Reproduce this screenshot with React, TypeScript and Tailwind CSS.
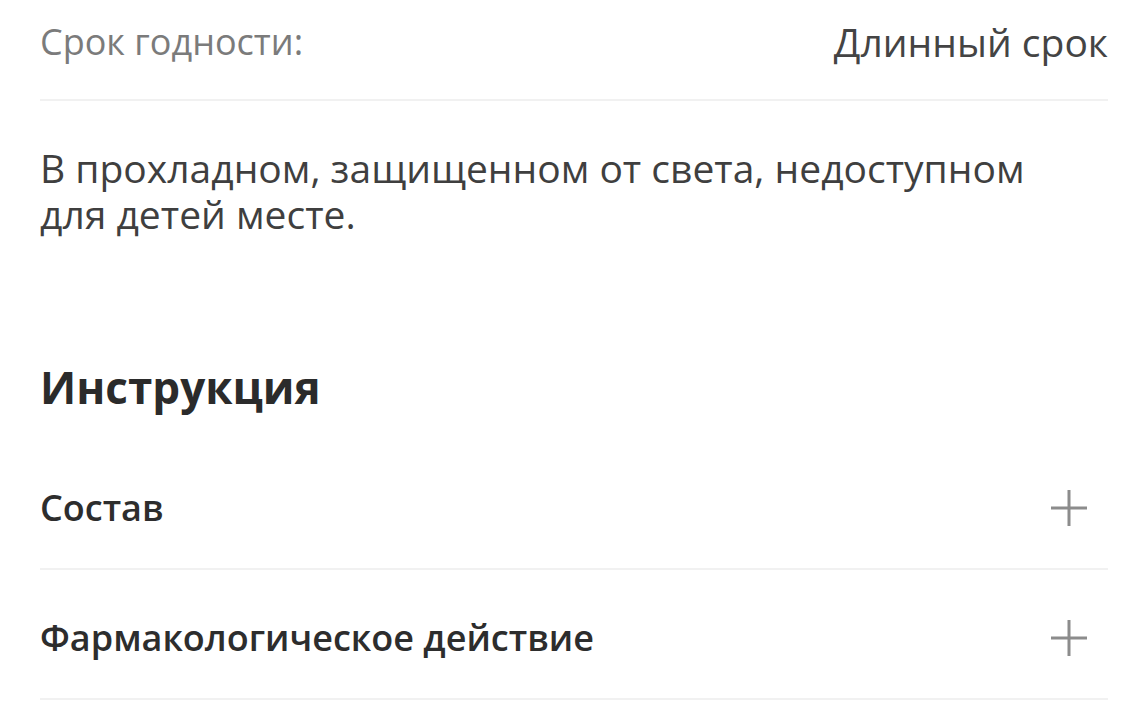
import React from 'react';

const Divider = () => <div className="h-[2px] bg-[#f1f1f1]" />;

const PlusIcon = () => (
  <svg width="38" height="38" viewBox="0 0 38 38" className="text-[#8c8c8c]">
    <path d="M19 1v36M1 19h36" stroke="currentColor" strokeWidth="3" />
  </svg>
);

const AccordionRow = ({ title }: { title: string }) => (
  <div>
    <div className="flex items-center justify-between pt-[48px] pb-[40px]">
      <span className="text-[36px] leading-[40px] font-semibold text-[#2d2d2d]">{title}</span>
      <div className="mr-5">
        <PlusIcon />
      </div>
    </div>
    <Divider />
  </div>
);

const App: React.FC = () => {
  return (
    <div className="min-h-[716px] bg-white pl-10 pr-[38px] font-['Open_Sans',sans-serif] overflow-hidden">
      <div className="flex items-center justify-between pt-[18px] pb-[33px]">
        <span className="text-[36px] leading-[48px] text-[#7b7b7b]">Срок годности:</span>
        <span className="text-[39px] leading-[48px] text-[#444444]">Длинный срок</span>
      </div>
      <Divider />
      <p className="mt-[44px] text-[39px] leading-[46px] text-[#3f3f3f]">
        В прохладном, защищенном от света, недоступном
        <br />
        для детей месте.
      </p>
      <h2 className="mt-[126px] text-[44px] leading-[48px] font-bold text-[#2b2b2b]">Инструкция</h2>
      <div className="mt-[29px]">
        <AccordionRow title="Состав" />
        <AccordionRow title="Фармакологическое действие" />
      </div>
    </div>
  );
};

export default App;
